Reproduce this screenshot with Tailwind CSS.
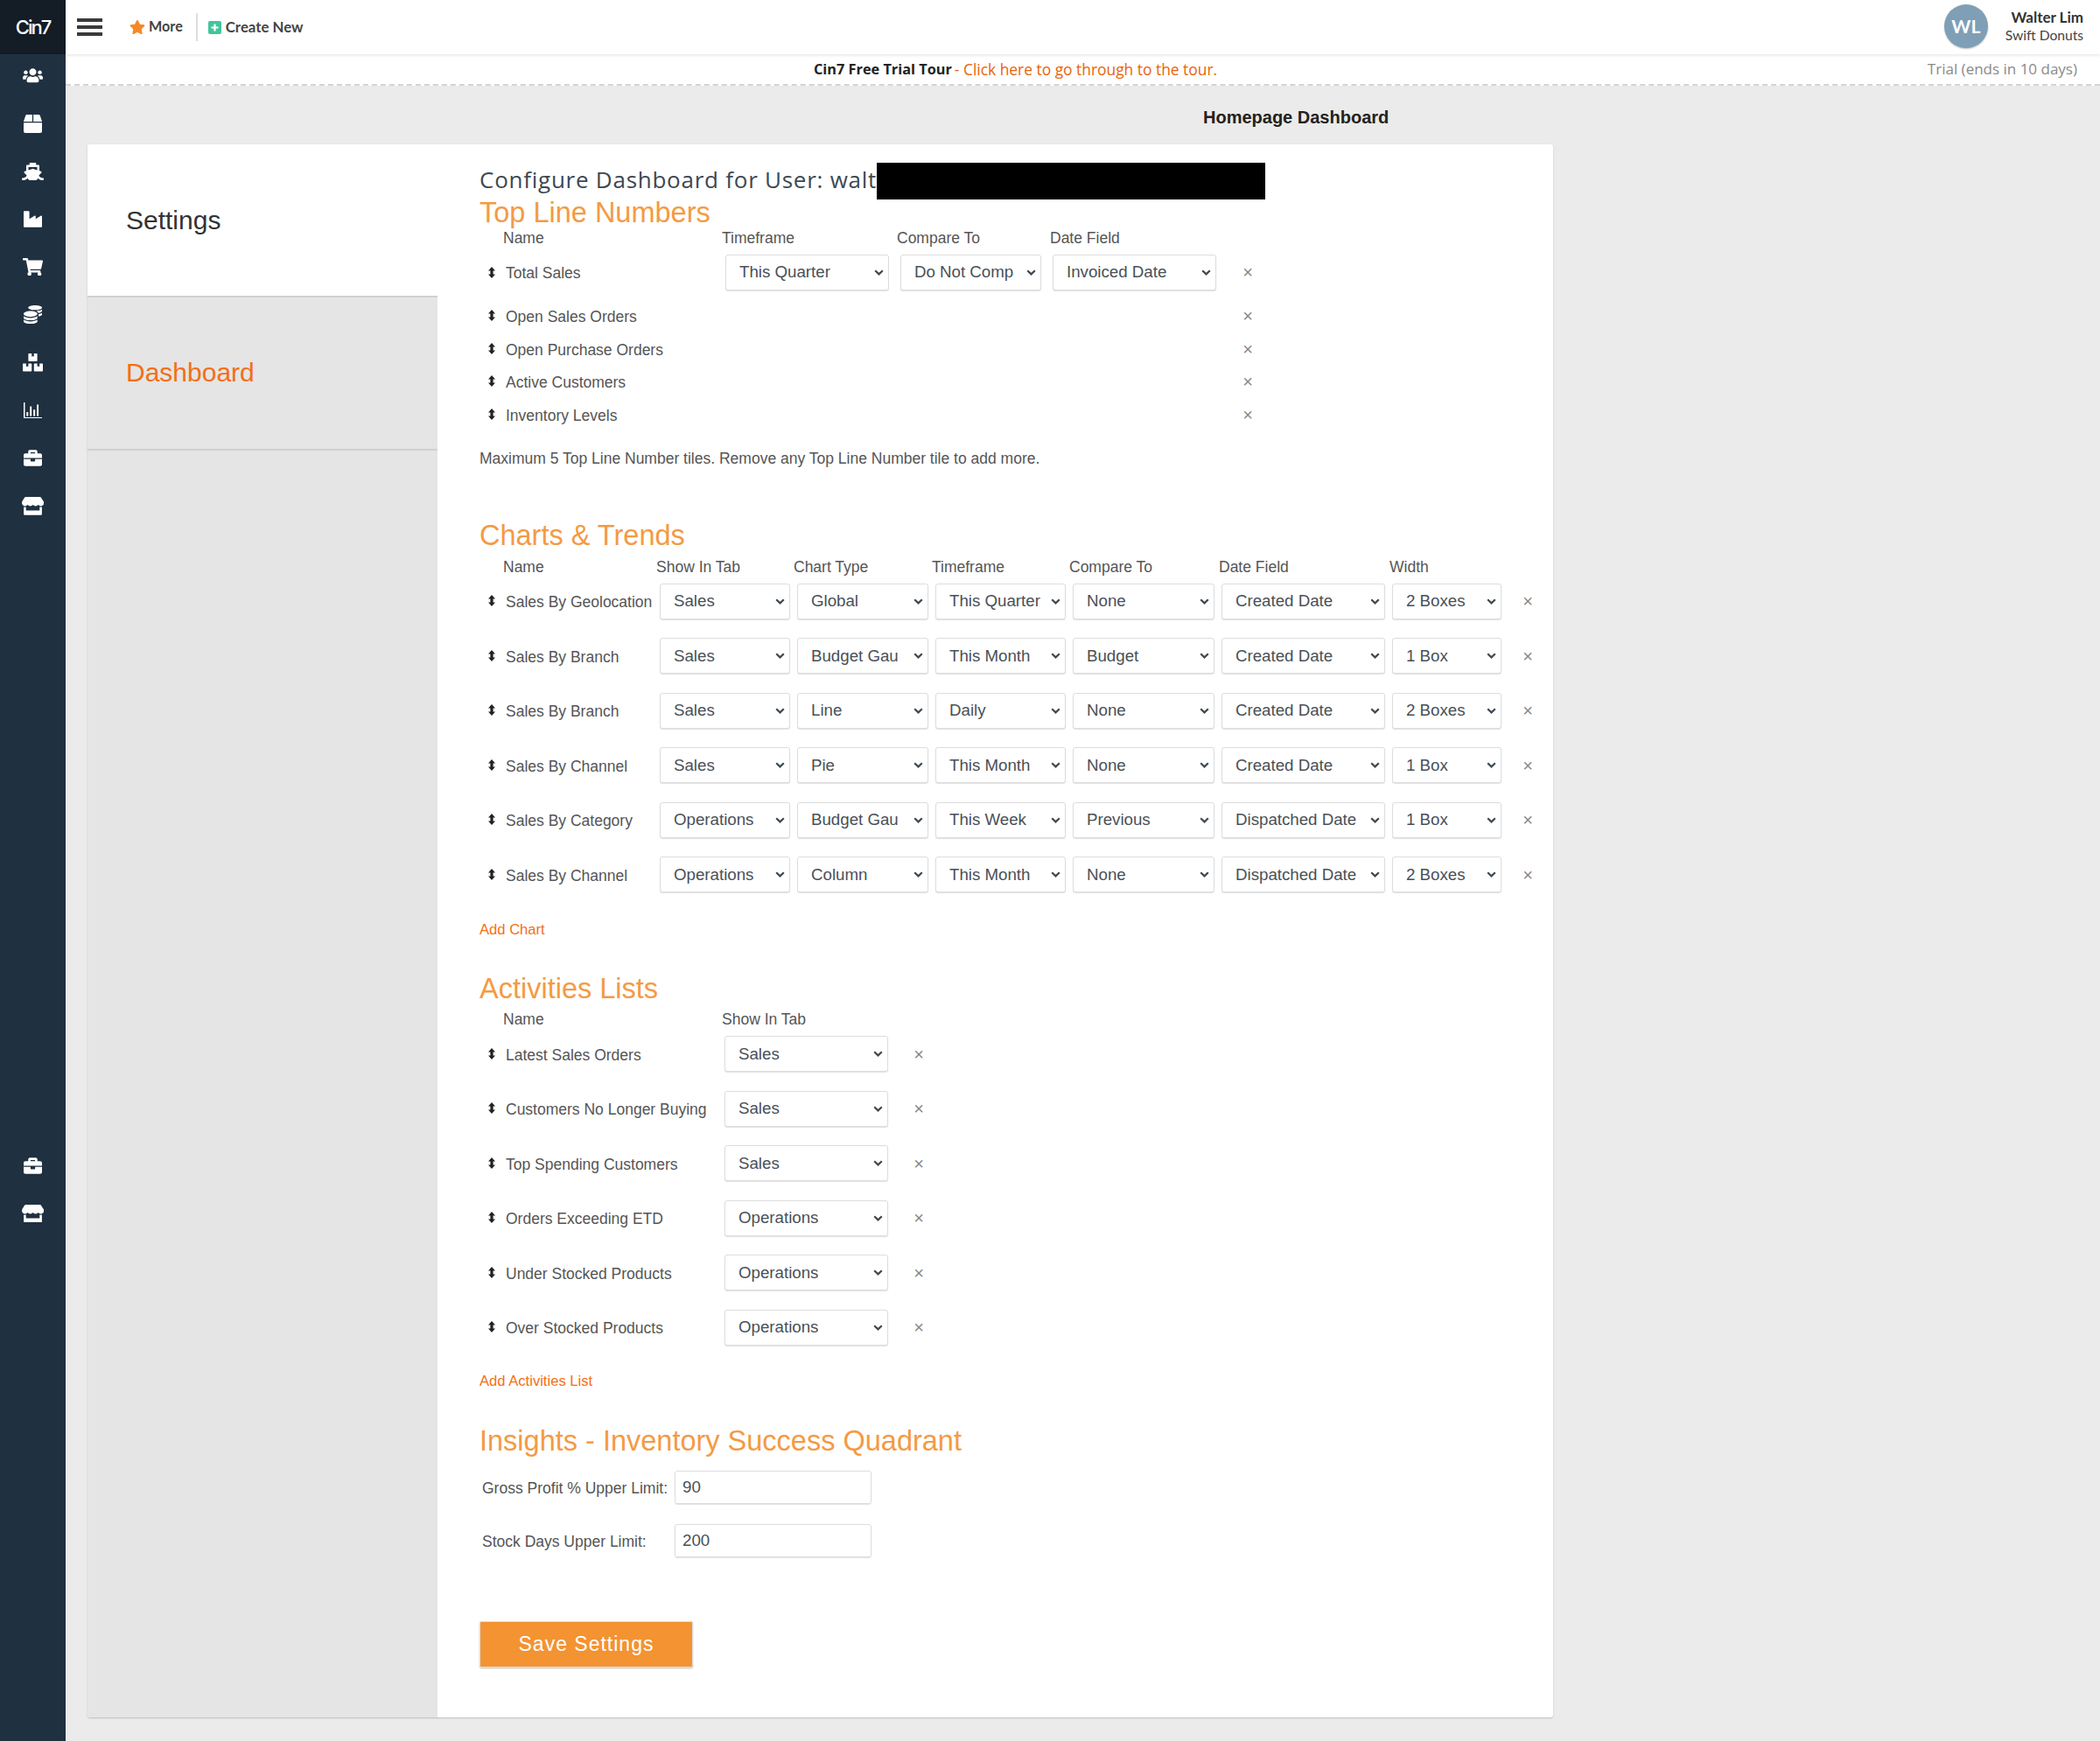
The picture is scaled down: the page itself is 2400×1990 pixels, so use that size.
<!DOCTYPE html>
<html lang="en">
<head>
    <meta charset="UTF-8">
    <title>Cin7 - Homepage Dashboard</title>
    <script src="https://cdn.jsdelivr.net/npm/@tailwindcss/browser@4"></script>
</head>
<body class="bg-[#ebebeb] font-['Liberation_Sans',sans-serif] text-[#555]">
<div class="flex w-[2400px] h-[1990px] overflow-hidden">

    <!-- sidebar -->
    <aside class="w-[75px] shrink-0 bg-[#1f3040] text-white">
        <div class="h-[62px] bg-[#141c26] flex items-center justify-center font-['Inter',sans-serif] text-[22px] font-medium tracking-[-2px]">Cin7</div>
        <nav class="-mt-[3px] [&>a]:h-[54.7px] [&>a]:flex [&>a]:items-center [&>a]:justify-center [&_svg]:fill-white">
            <a><svg class="w-[23px]" viewBox="0 0 640 512"><path d="M96 224c35.3 0 64-28.7 64-64s-28.7-64-64-64-64 28.7-64 64 28.7 64 64 64zm448 0c35.3 0 64-28.7 64-64s-28.7-64-64-64-64 28.7-64 64 28.7 64 64 64zm32 32h-64c-17.6 0-33.5 7.1-45.1 18.6 40.3 22.1 68.9 62 75.1 109.4h66c17.7 0 32-14.3 32-32v-32c0-35.3-28.7-64-64-64zm-256 0c61.9 0 112-50.1 112-112S381.9 32 320 32 208 82.1 208 144s50.1 112 112 112zm76.8 32h-8.3c-20.8 10-43.9 16-68.5 16s-47.6-6-68.5-16h-8.3C179.6 288 128 339.6 128 403.2V432c0 26.5 21.5 48 48 48h288c26.5 0 48-21.5 48-48v-28.8c0-63.6-51.6-115.2-115.2-115.2zm-223.7-13.4C161.5 263.1 145.6 256 128 256H64c-35.3 0-64 28.7-64 64v32c0 17.7 14.3 32 32 32h65.9c6.3-47.4 34.9-87.3 75.2-109.4z"/></svg></a>
            <a><svg class="w-[21px]" viewBox="0 0 512 512"><path d="M509.5 184.6L458.9 32.8C452.4 13.2 434.1 0 413.4 0H272v192h238.7c-.4-2.5-.4-5-1.2-7.4zM240 0H98.6c-20.7 0-39 13.2-45.5 32.8L2.5 184.6c-.8 2.4-.8 4.9-1.2 7.4H240V0zM0 224v240c0 26.5 21.5 48 48 48h416c26.5 0 48-21.5 48-48V224H0z"/></svg></a>
            <a><svg class="w-[25px]" viewBox="0 0 640 512"><path d="M496.616 372.639l70.012-70.012c16.899-16.9 9.942-45.771-12.836-53.092L512 236.102V96c0-17.673-14.327-32-32-32h-64V24c0-13.255-10.745-24-24-24H248c-13.255 0-24 10.745-24 24v40h-64c-17.673 0-32 14.327-32 32v140.102l-41.792 13.433c-22.753 7.313-29.754 36.173-12.836 53.092l70.012 70.012C125.828 416.287 85.587 448 24 448c-13.255 0-24 10.745-24 24v16c0 13.255 10.745 24 24 24 61.023 0 107.499-20.61 143.258-59.396C181.677 487.432 216.021 512 256 512h128c39.979 0 74.323-24.568 88.742-59.396C508.495 491.384 554.968 512 616 512c13.255 0 24-10.745 24-24v-16c0-13.255-10.745-24-24-24-60.817 0-101.542-31.001-119.384-75.361zM192 128h256v87.531l-118.208-37.995a31.995 31.995 0 0 0-19.584 0L192 215.531V128z"/></svg></a>
            <a><svg class="w-[21px]" viewBox="0 0 512 512"><path d="M475.115 163.781L336 252.309v-68.28c0-18.916-20.931-30.399-36.885-20.248L160 252.309V56c0-13.255-10.745-24-24-24H24C10.745 32 0 42.745 0 56v400c0 13.255 10.745 24 24 24h464c13.255 0 24-10.745 24-24V184.029c0-18.917-20.931-30.399-36.885-20.248z"/></svg></a>
            <a><svg class="w-[23px]" viewBox="0 0 576 512"><path d="M528.12 301.319l47.273-208C578.806 78.301 567.391 64 551.99 64H159.208l-9.166-44.81C147.758 8.021 137.93 0 126.529 0H24C10.745 0 0 10.745 0 24v16c0 13.255 10.745 24 24 24h69.883l70.248 343.435C147.325 417.1 136 435.222 136 456c0 30.928 25.072 56 56 56s56-25.072 56-56c0-15.674-6.447-29.835-16.824-40h209.647C430.447 426.165 424 440.326 424 456c0 30.928 25.072 56 56 56s56-25.072 56-56c0-22.172-12.888-41.332-31.579-50.405l5.517-24.276c3.413-15.018-8.002-29.319-23.403-29.319H218.117l-6.545-32h293.145c11.206 0 20.92-7.754 23.403-18.681z"/></svg></a>
            <a><svg class="w-[21px]" viewBox="0 0 512 512"><path d="M0 405.3V448c0 35.3 86 64 192 64s192-28.7 192-64v-42.7C342.7 434.4 267.2 448 192 448S41.3 434.4 0 405.3zM320 128c106 0 192-28.7 192-64S426 0 320 0 128 28.7 128 64s86 64 192 64zM0 300.4V352c0 35.3 86 64 192 64s192-28.7 192-64v-51.6c-41.3 34-116.9 51.6-192 51.6S41.3 334.4 0 300.4zm416 11c57.3-11.1 96-31.7 96-55.4v-42.7c-23.2 16.4-57.3 27.6-96 34.5v63.6zM192 160C86 160 0 195.8 0 240s86 80 192 80 192-35.8 192-80-86-80-192-80zm219.3 56.3c60-10.8 100.7-32 100.7-56.3v-42.7c-35.5 25.1-96.5 38.6-160.7 41.8 29.5 14.3 51.2 33.5 60 57.2z"/></svg></a>
            <a><svg class="w-[23px]" viewBox="0 0 576 512"><path d="M560 288h-80v96l-32-21.3-32 21.3v-96h-80c-8.8 0-16 7.2-16 16v192c0 8.8 7.2 16 16 16h224c8.8 0 16-7.2 16-16V304c0-8.8-7.2-16-16-16zm-384-64h224c8.8 0 16-7.2 16-16V16c0-8.8-7.2-16-16-16h-80v96l-32-21.3L256 96V0h-80c-8.8 0-16 7.2-16 16v192c0 8.8 7.2 16 16 16zm64 64h-80v96l-32-21.3L96 384v-96H16c-8.8 0-16 7.2-16 16v192c0 8.8 7.2 16 16 16h224c8.8 0 16-7.2 16-16V304c0-8.8-7.2-16-16-16z"/></svg></a>
            <a><svg class="w-[21px]" viewBox="0 0 512 448"><path d="M0 0h36v412h476v36H0z"/><rect x="80" y="270" width="48" height="110"/><rect x="176" y="110" width="48" height="270"/><rect x="272" y="200" width="48" height="180"/><rect x="368" y="60" width="48" height="320"/></svg></a>
            <a><svg class="w-[21px]" viewBox="0 0 512 512"><path d="M320 336c0 8.84-7.16 16-16 16h-96c-8.84 0-16-7.16-16-16v-48H0v144c0 25.6 22.4 48 48 48h416c25.6 0 48-22.4 48-48V288H320v48zm144-208h-80V80c0-25.6-22.4-48-48-48H176c-25.6 0-48 22.4-48 48v48H48c-25.6 0-48 22.4-48 48v80h512v-80c0-25.6-22.4-48-48-48zm-144 0H192V96h128v32z"/></svg></a>
            <a><svg class="w-[25px]" viewBox="0 0 616 512"><path d="M602 118.6L537.1 15C531.3 5.7 521 0 510 0H106C95 0 84.7 5.7 78.9 15L14 118.6c-33.9 54.1-3.8 129.3 59.6 138 4.6.6 9.2.9 13.7.9 29.9 0 56.5-13.2 74.9-33.6 18.4 20.4 44.9 33.6 74.9 33.6 29.9 0 56.5-13.2 74.9-33.6 18.4 20.4 44.9 33.6 74.9 33.6 29.9 0 56.5-13.2 74.9-33.6 18.4 20.4 44.9 33.6 74.9 33.6 4.6 0 9.2-.3 13.7-.9 63.4-8.8 93.5-84 59.7-138zM529.5 288c-10 0-19.9-1.5-29.5-3.8V384H116v-99.8c-9.6 2.2-19.5 3.8-29.5 3.8-6 0-12.1-.4-18-1.2-5.6-.8-11.1-2.1-16.4-3.6V480c0 17.7 14.3 32 32 32h448c17.7 0 32-14.3 32-32V281.2c-5.4 1.6-10.8 2.9-16.4 3.6-6.1.8-12.1 1.2-18.2 1.2z"/></svg></a>
            <div class="h-[699px]"></div>
            <a><svg class="w-[21px]" viewBox="0 0 512 512"><path d="M320 336c0 8.84-7.16 16-16 16h-96c-8.84 0-16-7.16-16-16v-48H0v144c0 25.6 22.4 48 48 48h416c25.6 0 48-22.4 48-48V288H320v48zm144-208h-80V80c0-25.6-22.4-48-48-48H176c-25.6 0-48 22.4-48 48v48H48c-25.6 0-48 22.4-48 48v80h512v-80c0-25.6-22.4-48-48-48zm-144 0H192V96h128v32z"/></svg></a>
            <a><svg class="w-[25px]" viewBox="0 0 616 512"><path d="M602 118.6L537.1 15C531.3 5.7 521 0 510 0H106C95 0 84.7 5.7 78.9 15L14 118.6c-33.9 54.1-3.8 129.3 59.6 138 4.6.6 9.2.9 13.7.9 29.9 0 56.5-13.2 74.9-33.6 18.4 20.4 44.9 33.6 74.9 33.6 29.9 0 56.5-13.2 74.9-33.6 18.4 20.4 44.9 33.6 74.9 33.6 29.9 0 56.5-13.2 74.9-33.6 18.4 20.4 44.9 33.6 74.9 33.6 4.6 0 9.2-.3 13.7-.9 63.4-8.8 93.5-84 59.7-138zM529.5 288c-10 0-19.9-1.5-29.5-3.8V384H116v-99.8c-9.6 2.2-19.5 3.8-29.5 3.8-6 0-12.1-.4-18-1.2-5.6-.8-11.1-2.1-16.4-3.6V480c0 17.7 14.3 32 32 32h448c17.7 0 32-14.3 32-32V281.2c-5.4 1.6-10.8 2.9-16.4 3.6-6.1.8-12.1 1.2-18.2 1.2z"/></svg></a>
        </nav>
    </aside>

    <div class="flex-1 min-w-0">
        <!-- top bar -->
        <header class="relative h-[62px] bg-white shadow-[0_1px_4px_rgba(0,0,0,0.12)] flex items-center font-['Lato',sans-serif] text-[#444]">
            <div class="ml-[13px] w-[29px] h-[20px] flex flex-col justify-between">
                <span class="h-[4px] bg-[#3a3a3a]"></span>
                <span class="h-[4px] bg-[#3a3a3a]"></span>
                <span class="h-[4px] bg-[#3a3a3a]"></span>
            </div>
            <svg class="ml-[31px] w-[18px]" viewBox="0 0 576 512"><path fill="#f58a25" d="M259.3 17.8L194 150.2 47.9 171.5c-26.2 3.8-36.7 36.1-17.7 54.6l105.7 103-25 145.5c-4.5 26.3 23.2 46 46.4 33.7L288 439.6l130.7 68.7c23.2 12.2 50.9-7.4 46.4-33.7l-25-145.5 105.7-103c19-18.5 8.5-50.8-17.7-54.6L382 150.2 316.7 17.8c-11.7-23.6-45.6-23.9-57.4 0z"/></svg>
            <span class="ml-[4px] text-[16.2px] font-bold -mt-[1px]">More</span>
            <span class="ml-[15px] w-[2px] h-[32px] bg-[#ddd]"></span>
            <svg class="ml-[12px] w-[15px] h-[15px]" viewBox="0 0 15 15"><rect width="15" height="15" rx="2" fill="#42c49b"/><path d="M7.5 3.5v8M3.5 7.5h8" stroke="#fff" stroke-width="2.2"/></svg>
            <span class="ml-[5px] text-[16.8px] font-bold -mt-[1px]">Create New</span>
            <div class="ml-auto -mt-[2px] w-[50px] h-[50px] rounded-full bg-[#7f9fb6] text-white flex items-center justify-center text-[21px] font-bold shadow-[0_1px_2px_rgba(0,0,0,0.25)]">WL</div>
            <div class="ml-[20px] mr-[19px] -mt-[3px] text-right leading-[21px]">
                <div class="text-[17px] font-bold text-[#333]">Walter Lim</div>
                <div class="text-[15.6px] text-[#444]">Swift Donuts</div>
            </div>
        </header>

        <!-- trial bar -->
        <div class="h-[36px] bg-white border-b-2 border-dashed border-[#d4d4d4] flex items-center pl-[855px] pr-[26px] font-['Open_Sans',sans-serif] text-[17px]">
            <b class="text-[16.3px] text-[#222]">Cin7 Free Trial Tour</b>
            <span class="ml-[3px] text-[17.4px] text-[#e8640c]">- Click here to go through to the tour.</span>
            <span class="ml-auto text-[#8a8a8a]">Trial (ends in 10 days)</span>
        </div>

        <div class="h-[67px] pt-[5px] pl-[1300px] flex items-center text-[20px] font-bold text-[#222]">Homepage Dashboard</div>

        <!-- card -->
        <div class="ml-[25px] w-[1675px] h-[1798px] bg-white rounded-[3px] shadow-[0_1px_2px_rgba(0,0,0,0.2)] flex overflow-hidden">
            <div class="w-[400px] shrink-0 bg-[#e5e5e5] text-[30px]">
                <div class="h-[175px] bg-white border-b-2 border-[#d0d0d0] pl-[44px] flex items-center text-[#333]">Settings</div>
                <div class="h-[175px] pb-[2px] border-b-2 border-[#d0d0d0] pl-[44px] flex items-center text-[#f36f13]">Dashboard</div>
            </div>

            <div class="flex-1 pl-[48px] pt-[21px] text-[17.5px] [&_select]:appearance-none [&_select]:bg-white [&_select]:bg-no-repeat [&_select]:bg-[position:right_5px_center] [&_select]:bg-[length:11px_7px] [&_select]:bg-[url('data:image/svg+xml,%3Csvg%20xmlns=%22http://www.w3.org/2000/svg%22%20viewBox=%220%200%2011%207%22%3E%3Cpath%20d=%22M1.2%201.2l4.3%204.2%204.3-4.2%22%20fill=%22none%22%20stroke=%22%233f4a52%22%20stroke-width=%222.2%22/%3E%3C/svg%3E')] [&_select]:border [&_select]:border-[#ddd] [&_select]:rounded-[3px] [&_select]:shadow-[0_1px_1px_rgba(0,0,0,0.12)] [&_select]:h-[41px] [&_select]:pl-[15px] [&_select]:pr-[26px] [&_select]:text-[18.7px] [&_select]:text-[#495057] [&_h2]:h-[36px] [&_h2]:leading-[36px] [&_h2]:text-[32.5px] [&_h2]:text-[#f49a44]">
                <div class="flex h-[42px]">
                    <span class="h-[38px] leading-[38px] font-['Open_Sans',sans-serif] text-[26px] tracking-[0.75px] text-[#3d4852]">Configure Dashboard for User: walt</span>
                    <span class="w-[444px] bg-black"></span>
                </div>

                <h2 class="-mt-[3px]">Top Line Numbers</h2>
                <div class="relative h-[22px] leading-[22px] [&>span]:absolute">
                    <span class="left-[27px]">Name</span><span class="left-[277px]">Timeframe</span><span class="left-[477px]">Compare To</span><span class="left-[652px]">Date Field</span>
                </div>
                <div class="h-[56px] flex items-center">
                    <svg class="ml-[10px] w-[8px] h-[13px] fill-[#222]" viewBox="0 0 10 16"><path d="M5 0l5 5.500H7v5h3L5 16 0 10.500h3v-5H0z"/></svg>
                    <span class="ml-[12px] mt-[2px] w-[251px]">Total Sales</span>
                    <select class="w-[187px]"><option>This Quarter</option></select>
                    <select class="ml-[13px] w-[161px] !pr-[30px]"><option>Do Not Compare</option></select>
                    <select class="ml-[13px] w-[187px]"><option>Invoiced Date</option></select>
                    <span class="ml-[26px] w-[20px] text-center text-[#888] text-[20px]">×</span>
                </div>
                <div class="h-[3.5px]"></div>
                <div class="[&>div]:h-[37.5px] [&>div]:flex [&>div]:items-center [&_svg]:ml-[10px] [&_svg]:w-[8px] [&_svg]:h-[13px] [&_svg]:-mt-[1px] [&_svg]:fill-[#222] [&_b]:font-normal [&_b]:mt-[2px] [&_b]:ml-[12px] [&_b]:w-[838px] [&_i]:not-italic [&_i]:w-[20px] [&_i]:text-center [&_i]:text-[#888] [&_i]:text-[20px]">
                    <div><svg viewBox="0 0 10 16"><path d="M5 0l5 5.500H7v5h3L5 16 0 10.500h3v-5H0z"/></svg><b>Open Sales Orders</b><i>×</i></div>
                    <div><svg viewBox="0 0 10 16"><path d="M5 0l5 5.500H7v5h3L5 16 0 10.500h3v-5H0z"/></svg><b>Open Purchase Orders</b><i>×</i></div>
                    <div><svg viewBox="0 0 10 16"><path d="M5 0l5 5.500H7v5h3L5 16 0 10.500h3v-5H0z"/></svg><b>Active Customers</b><i>×</i></div>
                    <div><svg viewBox="0 0 10 16"><path d="M5 0l5 5.500H7v5h3L5 16 0 10.500h3v-5H0z"/></svg><b>Inventory Levels</b><i>×</i></div>
                </div>
                <p class="mt-[19.5px] h-[24px] leading-[24px]">Maximum 5 Top Line Number tiles. Remove any Top Line Number tile to add more.</p>

                <h2 class="mt-[58px]">Charts &amp; Trends</h2>
                <div class="relative mt-[9px] h-[18px] leading-[18px] [&>span]:absolute">
                    <span class="left-[27px]">Name</span><span class="left-[202px]">Show In Tab</span><span class="left-[359px]">Chart Type</span><span class="left-[517px]">Timeframe</span><span class="left-[674px]">Compare To</span><span class="left-[845px]">Date Field</span><span class="left-[1040px]">Width</span>
                </div>
                <div class="-mt-[1px] [&>div]:h-[62.5px] [&>div]:flex [&>div]:items-center [&>div]:gap-[8px] [&_svg]:ml-[10px] [&_svg]:w-[8px] [&_svg]:h-[13px] [&_svg]:-mt-[1px] [&_svg]:fill-[#222] [&_b]:font-normal [&_b]:whitespace-nowrap [&_b]:mt-[2px] [&_b]:ml-[4px] [&_b]:w-[168px] [&_i]:not-italic [&_i]:ml-[12px] [&_i]:w-[20px] [&_i]:text-center [&_i]:text-[#888] [&_i]:text-[20px]">
                    <div><svg viewBox="0 0 10 16"><path d="M5 0l5 5.500H7v5h3L5 16 0 10.500h3v-5H0z"/></svg><b>Sales By Geolocation</b><select class="w-[149px]"><option>Sales</option></select><select class="w-[150px]"><option>Global</option></select><select class="w-[149px]"><option>This Quarter</option></select><select class="w-[162px]"><option>None</option></select><select class="w-[187px]"><option>Created Date</option></select><select class="w-[125px]"><option>2 Boxes</option></select><i>×</i></div>
                    <div><svg viewBox="0 0 10 16"><path d="M5 0l5 5.500H7v5h3L5 16 0 10.500h3v-5H0z"/></svg><b>Sales By Branch</b><select class="w-[149px]"><option>Sales</option></select><select class="w-[150px] !pr-[33px]"><option>Budget Gauge</option></select><select class="w-[149px]"><option>This Month</option></select><select class="w-[162px]"><option>Budget</option></select><select class="w-[187px]"><option>Created Date</option></select><select class="w-[125px]"><option>1 Box</option></select><i>×</i></div>
                    <div><svg viewBox="0 0 10 16"><path d="M5 0l5 5.500H7v5h3L5 16 0 10.500h3v-5H0z"/></svg><b>Sales By Branch</b><select class="w-[149px]"><option>Sales</option></select><select class="w-[150px]"><option>Line</option></select><select class="w-[149px]"><option>Daily</option></select><select class="w-[162px]"><option>None</option></select><select class="w-[187px]"><option>Created Date</option></select><select class="w-[125px]"><option>2 Boxes</option></select><i>×</i></div>
                    <div><svg viewBox="0 0 10 16"><path d="M5 0l5 5.500H7v5h3L5 16 0 10.500h3v-5H0z"/></svg><b>Sales By Channel</b><select class="w-[149px]"><option>Sales</option></select><select class="w-[150px]"><option>Pie</option></select><select class="w-[149px]"><option>This Month</option></select><select class="w-[162px]"><option>None</option></select><select class="w-[187px]"><option>Created Date</option></select><select class="w-[125px]"><option>1 Box</option></select><i>×</i></div>
                    <div><svg viewBox="0 0 10 16"><path d="M5 0l5 5.500H7v5h3L5 16 0 10.500h3v-5H0z"/></svg><b>Sales By Category</b><select class="w-[149px]"><option>Operations</option></select><select class="w-[150px] !pr-[33px]"><option>Budget Gauge</option></select><select class="w-[149px]"><option>This Week</option></select><select class="w-[162px]"><option>Previous</option></select><select class="w-[187px] !pr-[15px]"><option>Dispatched Date</option></select><select class="w-[125px]"><option>1 Box</option></select><i>×</i></div>
                    <div><svg viewBox="0 0 10 16"><path d="M5 0l5 5.500H7v5h3L5 16 0 10.500h3v-5H0z"/></svg><b>Sales By Channel</b><select class="w-[149px]"><option>Operations</option></select><select class="w-[150px]"><option>Column</option></select><select class="w-[149px]"><option>This Month</option></select><select class="w-[162px]"><option>None</option></select><select class="w-[187px] !pr-[15px]"><option>Dispatched Date</option></select><select class="w-[125px]"><option>2 Boxes</option></select><i>×</i></div>
                </div>
                <a class="block mt-[21.5px] h-[20px] leading-[20px] text-[16.6px] text-[#f36f13]">Add Chart</a>

                <h2 class="mt-[39.5px]">Activities Lists</h2>
                <div class="relative mt-[8px] h-[18px] leading-[18px] [&>span]:absolute">
                    <span class="left-[27px]">Name</span><span class="left-[277px]">Show In Tab</span>
                </div>
                <div class="-mt-[0.5px] [&>div]:h-[62.5px] [&>div]:flex [&>div]:items-center [&_svg]:ml-[10px] [&_svg]:w-[8px] [&_svg]:h-[13px] [&_svg]:-mt-[1px] [&_svg]:fill-[#222] [&_b]:font-normal [&_b]:mt-[2px] [&_b]:ml-[12px] [&_b]:w-[250px] [&_select]:w-[187px] [&_i]:not-italic [&_i]:ml-[25px] [&_i]:w-[20px] [&_i]:text-center [&_i]:text-[#888] [&_i]:text-[20px]">
                    <div><svg viewBox="0 0 10 16"><path d="M5 0l5 5.500H7v5h3L5 16 0 10.500h3v-5H0z"/></svg><b>Latest Sales Orders</b><select><option>Sales</option></select><i>×</i></div>
                    <div><svg viewBox="0 0 10 16"><path d="M5 0l5 5.500H7v5h3L5 16 0 10.500h3v-5H0z"/></svg><b>Customers No Longer Buying</b><select><option>Sales</option></select><i>×</i></div>
                    <div><svg viewBox="0 0 10 16"><path d="M5 0l5 5.500H7v5h3L5 16 0 10.500h3v-5H0z"/></svg><b>Top Spending Customers</b><select><option>Sales</option></select><i>×</i></div>
                    <div><svg viewBox="0 0 10 16"><path d="M5 0l5 5.500H7v5h3L5 16 0 10.500h3v-5H0z"/></svg><b>Orders Exceeding ETD</b><select><option>Operations</option></select><i>×</i></div>
                    <div><svg viewBox="0 0 10 16"><path d="M5 0l5 5.500H7v5h3L5 16 0 10.500h3v-5H0z"/></svg><b>Under Stocked Products</b><select><option>Operations</option></select><i>×</i></div>
                    <div><svg viewBox="0 0 10 16"><path d="M5 0l5 5.500H7v5h3L5 16 0 10.500h3v-5H0z"/></svg><b>Over Stocked Products</b><select><option>Operations</option></select><i>×</i></div>
                </div>
                <a class="block mt-[20.5px] h-[20px] leading-[20px] text-[16.6px] text-[#f36f13]">Add Activities List</a>

                <h2 class="mt-[39.5px]">Insights - Inventory Success Quadrant</h2>
                <div class="mt-[16px] flex items-center h-[38px]">
                    <label class="ml-[3px] w-[220px] mt-[4px]">Gross Profit % Upper Limit:</label>
                    <input type="text" value="90" class="w-[225px] h-[38px] px-[8px] pt-[1px] text-[18.7px] text-[#495057] border border-[#ddd] rounded-[3px] shadow-[0_1px_1px_rgba(0,0,0,0.12)]">
                </div>
                <div class="mt-[23px] flex items-center h-[38px]">
                    <label class="ml-[3px] w-[220px] mt-[3px]">Stock Days Upper Limit:</label>
                    <input type="text" value="200" class="w-[225px] h-[38px] px-[8px] pt-[1px] text-[18.7px] text-[#495057] border border-[#ddd] rounded-[3px] shadow-[0_1px_1px_rgba(0,0,0,0.12)]">
                </div>
                <button class="mt-[73px] block w-[244px] h-[53px] bg-[#f39332] border border-[#e0e0e0] rounded-[2px] shadow-[0_1px_2px_rgba(0,0,0,0.25)] text-white text-[23px] tracking-[1px]">Save Settings</button>
            </div>
        </div>
    </div>
</div>
</body>
</html>
